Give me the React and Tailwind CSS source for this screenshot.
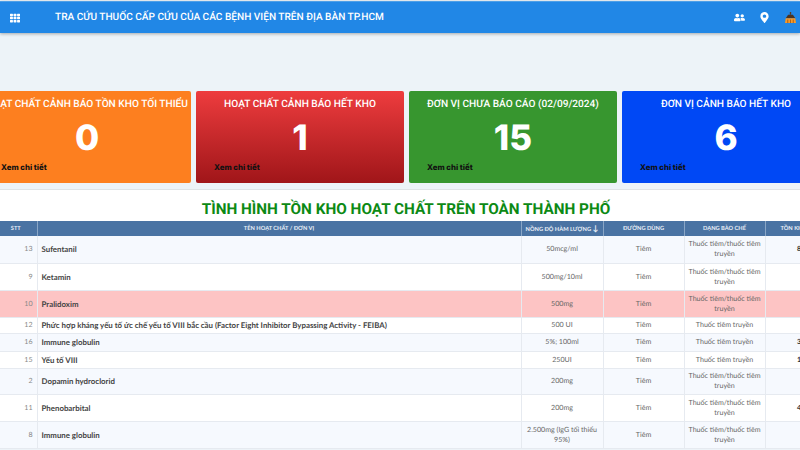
import { FaTh, FaUserFriends, FaMapMarkerAlt } from 'react-icons/fa';

const rows = [
  { stt: 13, name: 'Sufentanil', dose: '50mcg/ml', form: 'Thuốc tiêm/thuốc tiêm truyền', stock: '850', h: 'h-[27px]', bg: 'bg-[#f6f9fe]' },
  { stt: 9, name: 'Ketamin', dose: '500mg/10ml', form: 'Thuốc tiêm/thuốc tiêm truyền', stock: '', h: 'h-[27px]', bg: 'bg-white' },
  { stt: 10, name: 'Pralidoxim', dose: '500mg', form: 'Thuốc tiêm/thuốc tiêm truyền', stock: '', h: 'h-[27px]', bg: 'bg-[#fdc4c4]' },
  { stt: 12, name: 'Phức hợp kháng yếu tố ức chế yếu tố VIII bắc cầu (Factor Eight Inhibitor Bypassing Activity - FEIBA)', dose: '500 UI', form: 'Thuốc tiêm truyền', stock: '', h: 'h-[16px]', bg: 'bg-white' },
  { stt: 16, name: 'Immune globulin', dose: '5%; 100ml', form: 'Thuốc tiêm truyền', stock: '320', h: 'h-[18px]', bg: 'bg-[#f6f9fe]' },
  { stt: 15, name: 'Yếu tố VIII', dose: '250UI', form: 'Thuốc tiêm truyền', stock: '120', h: 'h-[17px]', bg: 'bg-white' },
  { stt: 2, name: 'Dopamin hydroclorid', dose: '200mg', form: 'Thuốc tiêm/thuốc tiêm truyền', stock: '', h: 'h-[26px]', bg: 'bg-[#f6f9fe]' },
  { stt: 11, name: 'Phenobarbital', dose: '200mg', form: 'Thuốc tiêm/thuốc tiêm truyền', stock: '420', h: 'h-[27px]', bg: 'bg-white' },
  { stt: 8, name: 'Immune globulin', dose: '2.500mg (IgG tối thiểu 95%)', form: 'Thuốc tiêm/thuốc tiêm truyền', stock: '', h: 'h-[27px]', bg: 'bg-[#f6f9fe]' },
];

const cards = [
  { title: 'HOẠT CHẤT CẢNH BÁO TỒN KHO TỐI THIỂU', value: '0', bg: 'bg-[#fd7f1f]' },
  { title: 'HOẠT CHẤT CẢNH BÁO HẾT KHO', value: '1', bg: 'bg-gradient-to-b from-[#ee3c3e] to-[#a01519]' },
  { title: 'ĐƠN VỊ CHƯA BÁO CÁO (02/09/2024)', value: '15', bg: 'bg-[#37962f]' },
  { title: 'ĐƠN VỊ CẢNH BÁO HẾT KHO', value: '6', bg: 'bg-[#0048f5]' },
];

function BroomIcon() {
  return (
    <svg viewBox="0 0 16 16" className="w-[11px] h-[11px]">
      <path d="M7 0h2v4H7z" fill="#5b3a1e" />
      <path d="M4.5 4h7L15 9H1z" fill="#4a3322" />
      <path d="M1 9h14l1 7H0z" fill="#f79a2a" />
      <path d="M4 11v5M8 11v5M12 11v5" stroke="#8a4b12" strokeWidth="1" />
    </svg>
  );
}

export default function App() {
  return (
    <div className="w-[800px] h-[450px] overflow-hidden bg-[#edf3f8] font-['Roboto',sans-serif] [text-rendering:geometricPrecision]">
      {/* Top bar */}
      <header className="mt-[1px] h-[32px] bg-[#2187e6] shadow-[0_1px_3px_rgba(0,0,0,0.3)] flex items-center text-white border-t border-[#4d9fe8]">
        <FaTh className="ml-[10px] w-[10px] h-[10px]" />
        <span className="ml-[35px] text-[10.1px] font-medium">TRA CỨU THUỐC CẤP CỨU CỦA CÁC BỆNH VIỆN TRÊN ĐỊA BÀN TP.HCM</span>
        <div className="ml-auto flex items-center">
          <FaUserFriends className="w-[11px] h-[11px]" />
          <FaMapMarkerAlt className="ml-[15px] w-[9px] h-[11px]" />
          <div className="ml-[16px] mr-[4px]"><BroomIcon /></div>
        </div>
      </header>

      {/* Summary cards */}
      <div className="mt-[58px] ml-[-17px] w-[900px] flex gap-[5px]">
        {cards.map((c) => (
          <div key={c.value} className={`w-[208px] h-[92px] rounded-[2px] text-white flex flex-col shrink-0 ${c.bg}`}>
            <div className="h-[26px] pt-[7px] text-center text-[10.15px] leading-[13px] font-medium whitespace-nowrap">{c.title}</div>
            <div className="h-[42px] flex items-center justify-center text-[35px] font-['Inter',sans-serif] font-extrabold">{c.value}</div>
            <div className="mt-[3px] pl-[18px] text-[7.8px] text-[#111] font-['Inter',sans-serif] font-extrabold">Xem chi tiết</div>
          </div>
        ))}
      </div>

      {/* Stock table */}
      <section className="mt-[6px] bg-white border-t border-[#dfe3e6]">
        <h1 className="h-[31px] pt-[9px] pl-[12px] text-center text-[15.3px] leading-[20px] font-bold text-[#0c8a14]">TÌNH HÌNH TỒN KHO HOẠT CHẤT TRÊN TOÀN THÀNH PHỐ</h1>
        <table className="ml-[-5px] w-[876px] table-fixed border-collapse font-['Lato',sans-serif] text-[7.1px] leading-[10px] text-[#666]">
          <colgroup>
            <col className="w-[42px]" />
            <col className="w-[484px]" />
            <col className="w-[82px]" />
            <col className="w-[81px]" />
            <col className="w-[81px]" />
            <col className="w-[106px]" />
          </colgroup>
          <thead>
            <tr className="h-[15px] bg-[#4a73a3] text-[#e8eef6] text-[5.7px] font-bold">
              <th className="border-r border-[#8aa6c6] text-center">STT</th>
              <th className="border-r border-[#8aa6c6] text-center">TÊN HOẠT CHẤT / ĐƠN VỊ</th>
              <th className="border-r border-[#8aa6c6] text-center whitespace-nowrap">NỒNG ĐỘ HÀM LƯỢNG <span className="text-[8px]">↓</span></th>
              <th className="border-r border-[#8aa6c6] text-center">ĐƯỜNG DÙNG</th>
              <th className="border-r border-[#8aa6c6] text-center">DẠNG BÀO CHẾ</th>
              <th className="text-left pl-[15px]">TỒN KHO</th>
            </tr>
          </thead>
          <tbody>
            {rows.map((r) => (
              <tr key={r.stt} className={`${r.h} ${r.bg} border-b border-[#e6eaf0]`}>
                <td className="border-r border-[#e6eaf0] text-right pr-[4px] text-[#888]">{r.stt}</td>
                <td className="border-r border-[#e6eaf0] pl-[4px] text-[7.85px] font-bold text-[#444]">{r.name}</td>
                <td className="border-r border-[#e6eaf0] text-center px-[2px]">{r.dose}</td>
                <td className="border-r border-[#e6eaf0] text-center">Tiêm</td>
                <td className="border-r border-[#e6eaf0] text-center px-[2px]">{r.form}</td>
                <td className="text-center pr-[30px] font-bold text-[#333]">{r.stock}</td>
              </tr>
            ))}
          </tbody>
        </table>
      </section>
    </div>
  );
}
